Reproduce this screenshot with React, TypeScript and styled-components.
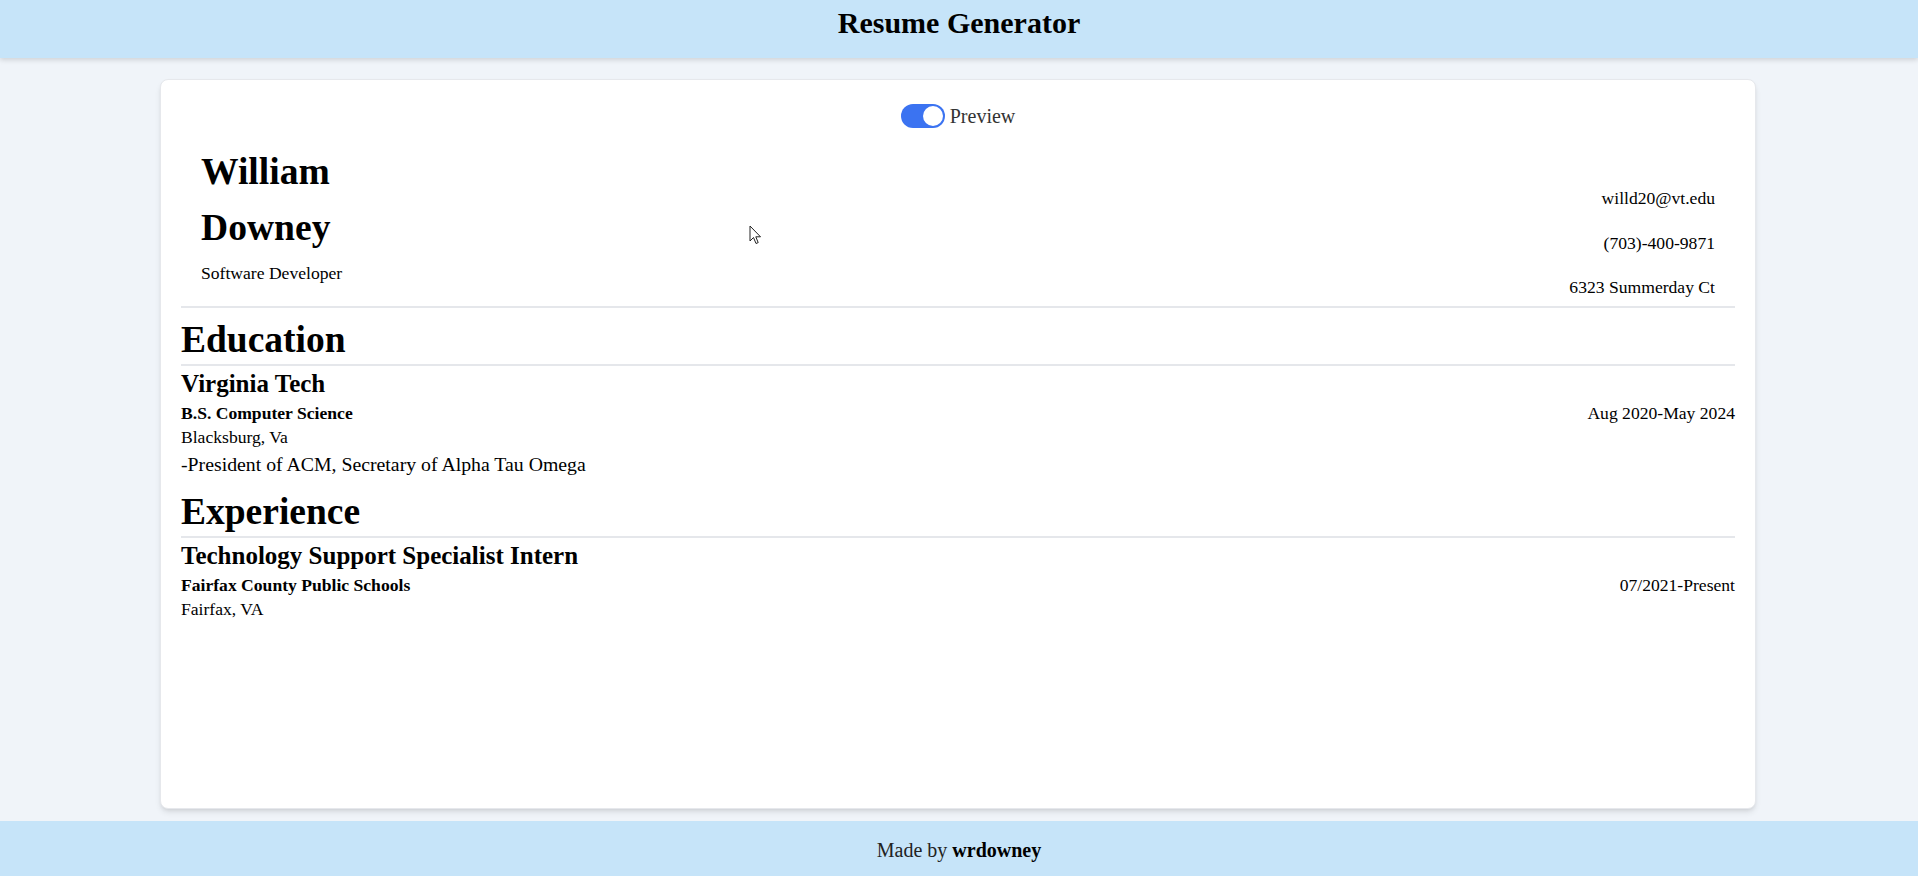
import React, { useState } from "react";
import styled, { createGlobalStyle } from "styled-components";

const GlobalStyle = createGlobalStyle`
  html, body {
    margin: 0;
    padding: 0;
  }
  * {
    box-sizing: border-box;
  }
  body {
    font-family: "Liberation Serif", "Times New Roman", serif;
    background: #f0f4f9;
    color: #000;
  }
`;

const Page = styled.div`
  min-height: 100vh;
  display: flex;
  flex-direction: column;
`;

const TopBar = styled.header`
  height: 58px;
  flex-shrink: 0;
  background: #c6e4f9;
  box-shadow: 0 2px 5px rgba(0, 0, 0, 0.14);
  display: flex;
  justify-content: center;
  padding-top: 6px;
  position: relative;
  z-index: 1;
`;

const Title = styled.h1`
  margin: 0;
  font-size: 30px;
  line-height: 34px;
  font-weight: 700;
`;

const Main = styled.main`
  flex: 1;
  display: flex;
  padding: 21px 162px 12px 160px;
`;

const Card = styled.section`
  flex: 1;
  position: relative;
  background: #fff;
  border: 1px solid #e6e8ec;
  border-radius: 8px;
  box-shadow: 0 4px 6px -1px rgba(0, 0, 0, 0.1), 0 2px 4px -2px rgba(0, 0, 0, 0.1);
  padding: 24px 20px;
`;

const ToggleRow = styled.div`
  display: flex;
  justify-content: center;
  align-items: center;
  gap: 5px;
  height: 24px;
`;

const Switch = styled.button<{ $on: boolean }>`
  position: relative;
  width: 44px;
  height: 24px;
  border: none;
  border-radius: 12px;
  padding: 0;
  background: ${(p) => (p.$on ? "#3b73f1" : "#c8ccd4")};
  cursor: pointer;
`;

const Knob = styled.span<{ $on: boolean }>`
  position: absolute;
  top: 2px;
  left: ${(p) => (p.$on ? "22px" : "2px")};
  width: 20px;
  height: 20px;
  border-radius: 50%;
  background: #fff;
`;

const ToggleLabel = styled.span`
  font-size: 20px;
  line-height: 24px;
  color: #333;
`;

const ResumeHeader = styled.div`
  display: flex;
  justify-content: space-between;
  align-items: flex-start;
  margin-top: 16px;
  padding: 0 20px 6px;
  border-bottom: 2px solid #e5e7eb;
`;

const NameCol = styled.div`
  display: flex;
  flex-direction: column;
`;

const Name = styled.h1`
  margin: 0;
  width: min-content;
  font-size: 37.6px;
  line-height: 56px;
  font-weight: 700;
`;

const Role = styled.p`
  margin: 5px 0 0;
  font-size: 17.6px;
  line-height: 24.5px;
`;

const ContactCol = styled.div`
  display: flex;
  flex-direction: column;
  align-items: flex-end;
  gap: 20px;
  padding-top: 42px;
  font-size: 17.6px;
  line-height: 24.5px;
`;

const Section = styled.div`
  display: flex;
  flex-direction: column;
`;

const SectionTitle = styled.h1`
  margin: 11px 0 0;
  padding-bottom: 3px;
  border-bottom: 2px solid #e5e7eb;
  font-size: 37.5px;
  line-height: 42px;
  font-weight: 700;
`;

const EntryTitle = styled.h2`
  margin: 0;
  font-size: 25px;
  line-height: 35px;
  font-weight: 700;
`;

const EntryRow = styled.div`
  display: flex;
  justify-content: space-between;
  font-size: 17.6px;
  line-height: 24px;
`;

const Strong = styled.span`
  font-weight: 700;
`;

const Location = styled.p`
  margin: 0;
  font-size: 17.6px;
  line-height: 24px;
`;

const Detail = styled.p`
  margin: 0;
  font-size: 19.8px;
  line-height: 31px;
`;

const Cursor = styled.svg`
  position: absolute;
  left: 588px;
  top: 145px;
  pointer-events: none;
`;

const Footer = styled.footer`
  height: 55px;
  flex-shrink: 0;
  background: #c6e4f9;
  display: flex;
  justify-content: center;
  align-items: center;
  padding-top: 3px;
  font-size: 20px;
  color: #222;
`;

const Bold = styled.b`
  font-weight: 700;
  color: #000;
`;

type Entry = {
  title: string;
  sub: string;
  date: string;
  place: string;
  detail?: string;
};

const education: Entry[] = [
  {
    title: "Virginia Tech",
    sub: "B.S. Computer Science",
    date: "Aug 2020-May 2024",
    place: "Blacksburg, Va",
    detail: "-President of ACM, Secretary of Alpha Tau Omega",
  },
];

const experience: Entry[] = [
  {
    title: "Technology Support Specialist Intern",
    sub: "Fairfax County Public Schools",
    date: "07/2021-Present",
    place: "Fairfax, VA",
  },
];

function EntryBlock({ e }: { e: Entry }) {
  return (
    <div>
      <EntryTitle>{e.title}</EntryTitle>
      <EntryRow>
        <Strong>{e.sub}</Strong>
        <span>{e.date}</span>
      </EntryRow>
      <Location>{e.place}</Location>
      {e.detail && <Detail>{e.detail}</Detail>}
    </div>
  );
}

export default function App() {
  const [preview, setPreview] = useState(true);
  return (
    <Page>
      <GlobalStyle />
      <TopBar>
        <Title>Resume Generator</Title>
      </TopBar>
      <Main>
        <Card>
          <ToggleRow>
            <Switch $on={preview} onClick={() => setPreview(!preview)} aria-label="Preview">
              <Knob $on={preview} />
            </Switch>
            <ToggleLabel>Preview</ToggleLabel>
          </ToggleRow>
          <ResumeHeader>
            <NameCol>
              <Name>William Downey</Name>
              <Role>Software Developer</Role>
            </NameCol>
            <ContactCol>
              <span>willd20@vt.edu</span>
              <span>(703)-400-9871</span>
              <span>6323 Summerday Ct</span>
            </ContactCol>
          </ResumeHeader>
          <Section>
            <SectionTitle>Education</SectionTitle>
            {education.map((e) => (
              <EntryBlock key={e.title} e={e} />
            ))}
          </Section>
          <Section>
            <SectionTitle>Experience</SectionTitle>
            {experience.map((e) => (
              <EntryBlock key={e.title} e={e} />
            ))}
          </Section>
          <Cursor width="13" height="20" viewBox="0 0 13 20">
            <path
              d="M1 1 L1 16 L4.5 12.5 L7 18.5 L9.2 17.6 L6.8 11.8 L11.5 11.8 Z"
              fill="#fff"
              stroke="#222"
              strokeWidth="1"
              strokeLinejoin="round"
            />
          </Cursor>
        </Card>
      </Main>
      <Footer>
        <span>
          Made by <Bold>wrdowney</Bold>
        </span>
      </Footer>
    </Page>
  );
}
